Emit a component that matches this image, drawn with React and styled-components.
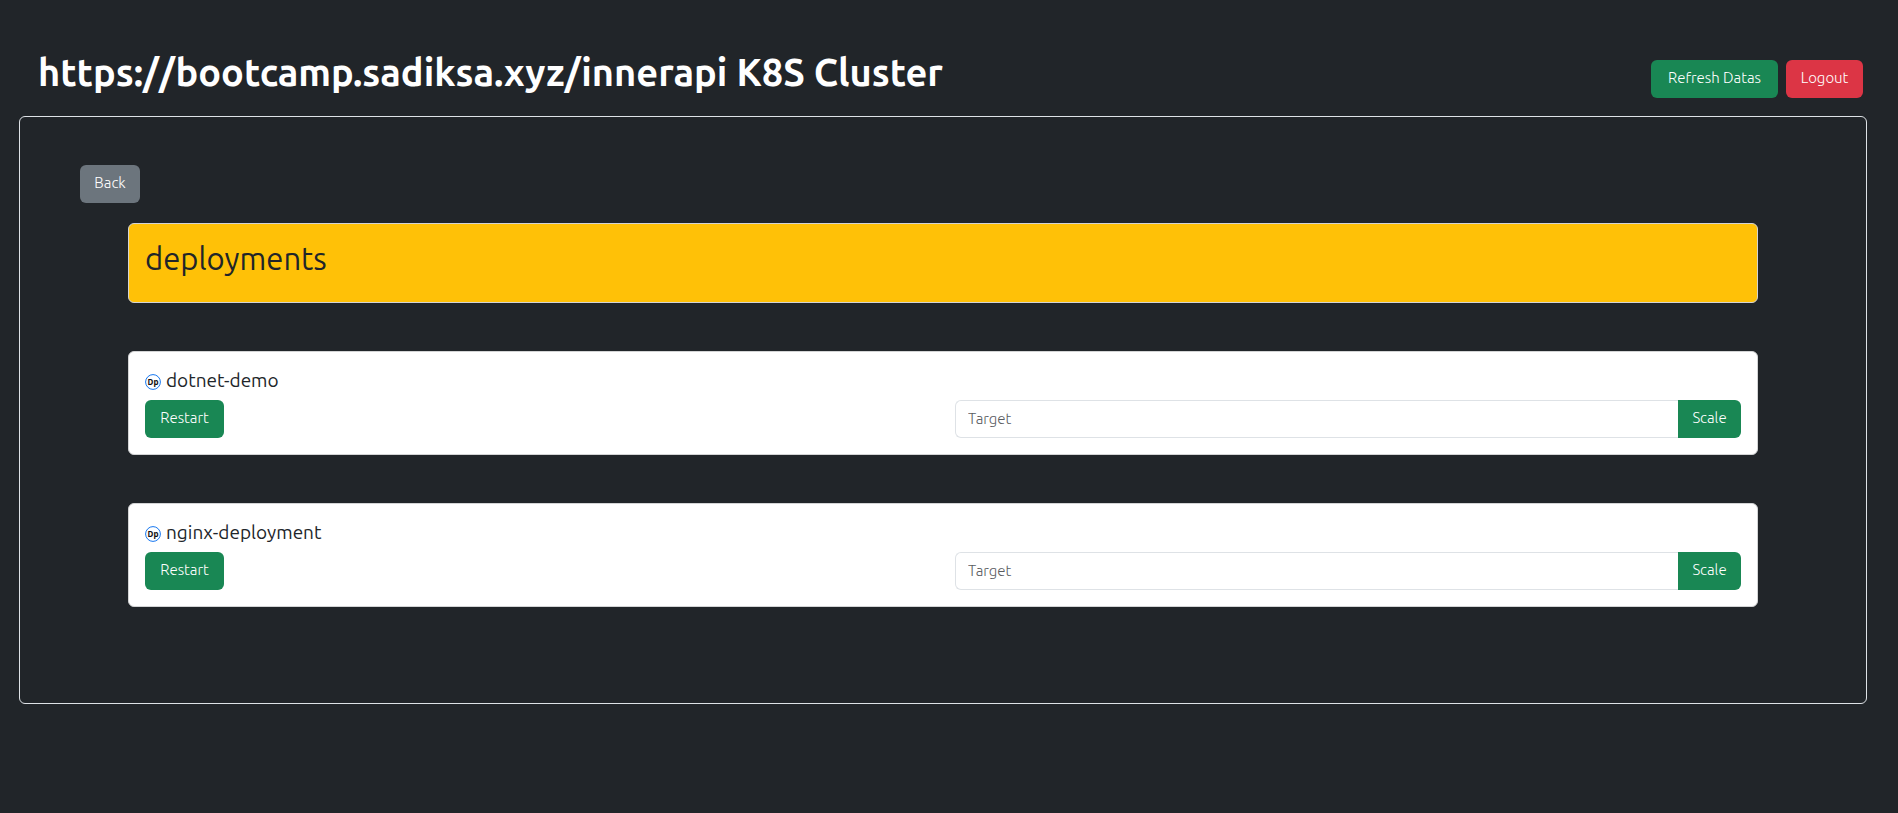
import React from "react";
import styled, { createGlobalStyle } from "styled-components";

const GlobalStyle = createGlobalStyle`
  *, *::before, *::after { box-sizing: border-box; }
  body {
    margin: 0;
    background: #212529;
    color: #212529;
    font-family: Ubuntu, "Noto Sans", sans-serif;
    font-size: 15px;
    line-height: 24px;
  }
`;

const Page = styled.main`
  padding: 47px 31px 48px 19px;
`;

const Header = styled.header`
  display: flex;
  justify-content: space-between;
  align-items: flex-end;
  padding: 0 4px 18px 19px;
`;

const Title = styled.h1`
  margin: 0;
  color: #fff;
  font-size: 38px;
  font-weight: 600;
  line-height: 51px;
`;

const Actions = styled.div`
  display: flex;
  gap: 8px;
`;

const tones = { success: "#198754", danger: "#dc3545", secondary: "#6c757d" };

const Button = styled.button`
  flex: none;
  min-width: ${(p) => p.$width}px;
  height: 38px;
  padding: 0;
  border: 0;
  border-radius: ${(p) => (p.$attached ? "0 6px 6px 0" : "6px")};
  background: ${(p) => tones[p.$tone]};
  color: #fff;
  font: inherit;
  font-weight: 300;
  padding-bottom: 2px;
  white-space: nowrap;
  cursor: pointer;
`;

const Panel = styled.section`
  padding: 48px 60px;
  border: 1px solid #dee2e6;
  border-radius: 6px;
`;

const List = styled.div`
  display: flex;
  flex-direction: column;
  gap: 48px;
  margin: 20px 48px 48px;
`;

const Card = styled.article`
  padding: 16px;
  border: 1px solid #d3d4d5;
  border-radius: 6px;
  background: ${(p) => (p.$warning ? "#ffc107" : "#fff")};
`;

const Kind = styled.h2`
  margin: 0 0 8px;
  font-size: 31px;
  font-weight: 400;
  line-height: 38px;
`;

const Name = styled.h3`
  display: flex;
  align-items: center;
  gap: 5px;
  margin: 0 0 8px;
  font-size: 19px;
  font-weight: 400;
  line-height: 24px;

  svg { margin-top: 4px; }
`;

const Controls = styled.div`
  display: grid;
  grid-template-columns: 1fr 1fr;
  gap: 24px;
`;

const ScaleForm = styled.form`
  display: flex;
`;

const Target = styled.input`
  flex: 1;
  min-width: 0;
  height: 38px;
  padding: 0 12px 2px;
  border: 1px solid #dee2e6;
  border-right: 0;
  border-radius: 6px 0 0 6px;
  background: #fff;
  color: #212529;
  font: inherit;

  &::placeholder { color: #595c5f; opacity: 1; font-weight: 300; }
`;

function DeploymentIcon() {
  return (
    <svg width="16" height="16" viewBox="0 0 16 16" aria-hidden="true">
      <circle cx="8" cy="8" r="7.4" fill="#fff" stroke="#1677f0" strokeWidth="1" />
      <text x="8" y="10.6" textAnchor="middle" fontFamily="Noto Sans, sans-serif" fontSize="8" fontWeight="700" fill="#111">Dp</text>
    </svg>
  );
}

function Deployment({ name }) {
  return (
    <Card>
      <Name><DeploymentIcon />{name}</Name>
      <Controls>
        <div><Button type="button" $tone="success" $width={79}>Restart</Button></div>
        <ScaleForm onSubmit={(e) => e.preventDefault()}>
          <Target placeholder="Target" aria-label={`Target replicas for ${name}`} />
          <Button type="submit" $tone="success" $width={63} $attached>Scale</Button>
        </ScaleForm>
      </Controls>
    </Card>
  );
}

export default function App() {
  return (
    <>
      <GlobalStyle />
      <Page>
        <Header>
          <Title>https://bootcamp.sadiksa.xyz/innerapi K8S Cluster</Title>
          <Actions>
            <Button type="button" $tone="success" $width={127}>Refresh Datas</Button>
            <Button type="button" $tone="danger" $width={77}>Logout</Button>
          </Actions>
        </Header>
        <Panel>
          <Button type="button" $tone="secondary" $width={60}>Back</Button>
          <List>
            <Card $warning><Kind>deployments</Kind></Card>
            <Deployment name="dotnet-demo" />
            <Deployment name="nginx-deployment" />
          </List>
        </Panel>
      </Page>
    </>
  );
}
